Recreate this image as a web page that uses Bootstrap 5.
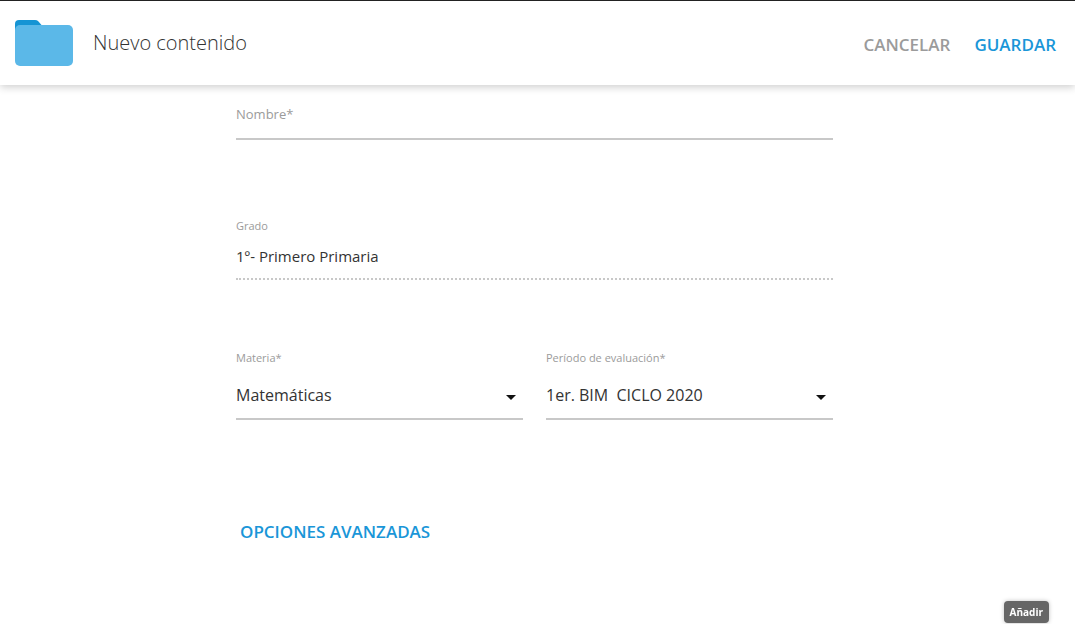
<!DOCTYPE html>
<html lang="es">
<head>
<meta charset="utf-8">
<meta name="viewport" content="width=device-width, initial-scale=1">
<title>Nuevo contenido</title>
<link href="https://cdn.jsdelivr.net/npm/bootstrap@5.3.0/dist/css/bootstrap.min.css" rel="stylesheet">
<style>
body { font-family: "Open Sans", "Noto Sans", sans-serif; color: #333; background: #fff; }
.topbar { min-height: 85px; padding: 0 15px; border-top: 1px solid #222; background: #fff; box-shadow: 0 2px 8px rgba(0,0,0,.2); }
.page-title { font-size: 20px; line-height: 28px; font-weight: 300; margin-left: 20px; }
.text-action { --bs-btn-padding-x: 4px; --bs-btn-padding-y: 4px; --bs-btn-line-height: 24px; --bs-btn-border-width: 0; --bs-btn-font-size: 17px; --bs-btn-font-weight: 600; --bs-btn-color: #1a96d8; --bs-btn-hover-color: #1277ae; }
.text-action.muted-action { --bs-btn-color: #9b9b9b; --bs-btn-hover-color: #777; }
.content-form { max-width: 597px; }
.form-page { padding: 16px 22px 16px 16px; }
.field-label { display: block; color: #9b9b9b; font-size: 11px; line-height: 16px; }
.line-field { padding: 0; border: 0; border-bottom: 2px solid #c8c8c8; border-radius: 0; color: #333; font-size: 16px; line-height: 24px; background-color: transparent; }
.line-field:focus { box-shadow: none; border-color: #1a96d8; }
.name-field { height: 39px; padding-bottom: 12px; font-size: 13px; }
.name-field::placeholder { color: #9b9b9b; opacity: 1; }
.fixed-field { height: 46px; border-bottom-style: dotted; font-size: 15px; }
.select-field { height: 54px; padding-top: 6px; background-image: url("data:image/svg+xml,%3Csvg xmlns='http://www.w3.org/2000/svg' viewBox='0 0 10 5'%3E%3Cpath d='M0 0h10L5 5z' fill='%23111'/%3E%3C/svg%3E"); background-size: 10px 5px; background-position: right 7px top 29px; }
.field-pair { --bs-gutter-x: 23px; margin-top: 70px; }
.gap-section { margin-top: 78px; }
.more-options { margin-top: 96px; }
.add-tip { right: 26px; bottom: 1px; padding: 3px 6px; border-radius: 4px; background: #666; color: #fff; font-size: 10px; line-height: 16px; font-weight: 700; box-shadow: 0 0 4px rgba(0,0,0,.25); }
</style>
</head>
<body>
<header class="topbar d-flex align-items-center justify-content-between">
  <div class="d-flex align-items-center">
    <svg width="58" height="48" viewBox="0 0 58 48" aria-hidden="true">
      <path d="M0 14V5q0-4 4-4h16q2 0 3 1l7 8v4z" fill="#1594d4"/>
      <rect y="6" width="58" height="41" rx="5" fill="#5bb8e8"/>
    </svg>
    <h1 class="page-title mb-0">Nuevo contenido</h1>
  </div>
  <div class="d-flex gap-3 pt-1">
    <button type="button" class="btn text-action muted-action">CANCELAR</button>
    <button type="submit" form="content" class="btn text-action">GUARDAR</button>
  </div>
</header>
<main class="form-page">
  <form id="content" class="content-form mx-auto">
    <input type="text" class="form-control line-field name-field" placeholder="Nombre*" aria-label="Nombre" required>
    <div class="gap-section">
      <label class="field-label" for="grade">Grado</label>
      <input id="grade" type="text" class="form-control line-field fixed-field" value="1º- Primero Primaria" readonly>
    </div>
    <div class="row field-pair">
      <div class="col-sm-6">
        <label class="field-label" for="subject">Materia*</label>
        <select id="subject" class="form-select line-field select-field"><option>Matemáticas</option></select>
      </div>
      <div class="col-sm-6">
        <label class="field-label" for="period">Período de evaluación*</label>
        <select id="period" class="form-select line-field select-field"><option>1er. BIM&nbsp; CICLO 2020</option></select>
      </div>
    </div>
    <button type="button" class="btn text-action more-options">OPCIONES AVANZADAS</button>
  </form>
</main>
<div class="add-tip position-fixed" role="tooltip">Añadir</div>
<script src="https://cdn.jsdelivr.net/npm/bootstrap@5.3.0/dist/js/bootstrap.bundle.min.js"></script>
</body>
</html>
